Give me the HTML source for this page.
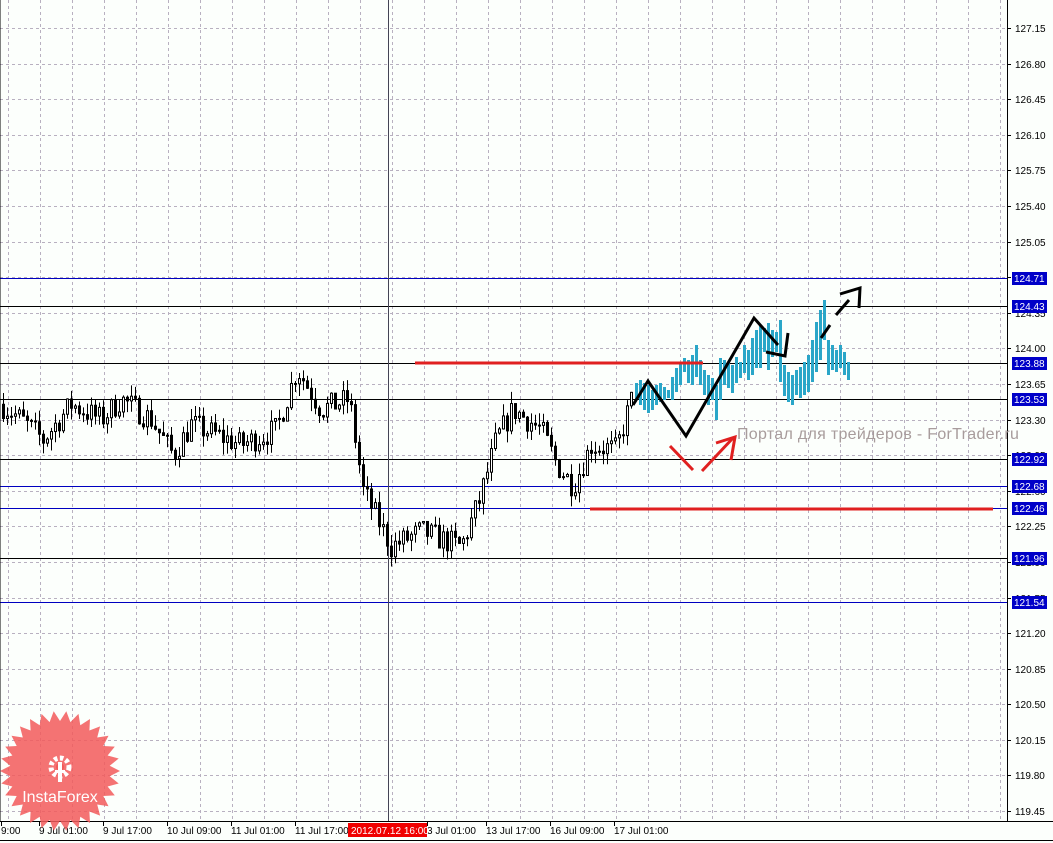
<!DOCTYPE html>
<html><head><meta charset="utf-8"><style>
html,body{margin:0;padding:0;background:#fff;width:1053px;height:843px;overflow:hidden}
svg{display:block}
text{font-family:"Liberation Sans",sans-serif}
</style></head><body>
<svg id="s" width="1053" height="843" xmlns="http://www.w3.org/2000/svg"></svg>
<script>
const s=document.getElementById('s');let h='';
const Y=p=>28+(127.15-p)*101.7;
h+='<rect width="1053" height="843" fill="#fcfffc"/>';
for(let x=8;x<1007;x+=32)h+=`<line x1="${x}.5" y1="0" x2="${x}.5" y2="821" stroke="#b8b0c0" stroke-dasharray="3,3"/>`;
const labels=[];
for(let i=0;i<23;i++){const p=127.15-i*0.35;const y=Math.round(Y(p));labels.push([p,y]);h+=`<line x1="0" y1="${y}.5" x2="1007" y2="${y}.5" stroke="#b8b0c0" stroke-dasharray="3,3"/>`;}
h+='<line x1="1007.5" y1="0" x2="1007.5" y2="821" stroke="#000"/>';
h+='<line x1="0" y1="821.5" x2="1053" y2="821.5" stroke="#000"/>';
h+='<line x1="0" y1="840.5" x2="1053" y2="840.5" stroke="#000"/>';
labels.forEach(([p,y])=>{h+=`<line x1="1007" y1="${y}.5" x2="1011" y2="${y}.5" stroke="#000"/><text x="1015" y="${y+4}" font-size="10" fill="#000">${p.toFixed(2)}</text>`;});
const lv=[[278,'#0000c0','124.71'],[306,'#000','124.43'],[363,'#000','123.88'],[399,'#000','123.53'],[459,'#000','122.92'],[486,'#0000c0','122.68'],[508,'#0000c0','122.46'],[558,'#000','121.96'],[602,'#0000c0','121.54']];
lv.forEach(([y,c])=>{h+=`<line x1="0" y1="${y}.5" x2="1007" y2="${y}.5" stroke="${c}"/>`;});
h+='<line x1="0" y1="0" x2="0" y2="821" stroke="#000"/>';
h+='<line x1="388.5" y1="0" x2="388.5" y2="821" stroke="#445"/>';
const pts=[[0,123.45],[20,123.3],[42,123.1],[70,123.45],[100,123.3],[120,123.5],[150,123.3],[172,122.95],[190,123.25],[240,123.05],[275,123.2],[296,123.8],[320,123.4],[348,123.5],[362,122.6],[390,122.05],[420,122.2],[460,122.05],[478,122.5],[495,123.1],[512,123.4],[540,123.2],[556,122.85],[572,122.65],[590,123.05],[615,123.0],[632,123.55]];
function interp(x){for(let i=0;i<pts.length-1;i++){if(x<=pts[i+1][0]){const t=(x-pts[i][0])/(pts[i+1][0]-pts[i][0]);return pts[i][1]+t*(pts[i+1][1]-pts[i][1]);}}return pts[pts.length-1][1];}
let seed=7;const r=()=>{seed=(seed*16807)%2147483647;return seed/2147483647;};
let prev=interp(0);
for(let x=2;x<632;x+=4){const c=interp(x)+(r()-0.5)*0.25;const o=prev;const hi=Math.max(o,c)+r()*0.12;const lo=Math.min(o,c)-r()*0.12;
h+=`<line x1="${x+1}.5" y1="${Y(hi)}" x2="${x+1}.5" y2="${Y(lo)}" stroke="#000"/>`;
const t=Y(Math.max(o,c)),b=Y(Math.min(o,c));
h+=`<rect x="${x}.5" y="${t}" width="2" height="${Math.max(1,b-t)}" fill="${c>o?'#fff':'#000'}" stroke="#000" stroke-width="1"/>`;prev=c;}
const bb=[[635,383,400],[639,380,405],[643,383,410],[647,385,413],[651,390,410],[655,385,405],[659,383,402],[663,387,400],[667,390,398],[671,377,400],[675,368,392],[679,362,385],[683,358,372],[687,360,383],[691,355,385],[695,345,377],[699,360,385],[703,370,395],[707,375,405],[711,378,400],[715,385,420],[719,358,400],[723,360,385],[727,362,388],[731,365,393],[735,357,383],[739,362,378],[743,345,373],[747,350,380],[751,338,375],[755,330,368],[759,325,368],[763,328,352],[767,323,370],[771,330,357],[775,332,352],[779,320,382],[783,365,396],[787,372,402],[791,375,405],[795,370,395],[799,367,398],[803,362,395],[807,355,392],[811,340,382],[815,322,372],[819,310,360],[823,300,340],[827,340,375],[831,345,370],[835,350,372],[839,345,368],[843,352,375],[847,362,380]];
bb.forEach(([x,a,b])=>{h+=`<rect x="${x}" y="${a}" width="3" height="${b-a}" fill="#2aa6c8"/>`;});
h+='<line x1="415" y1="363" x2="703" y2="363" stroke="#e02020" stroke-width="3"/>';
h+='<line x1="590" y1="509" x2="993" y2="509" stroke="#e02020" stroke-width="3"/>';
h+='<polyline points="633,405 648,381 686,436 754,318 778,345" fill="none" stroke="#000" stroke-width="3"/>';
h+='<polyline points="766,352 785,356 788,333" fill="none" stroke="#000" stroke-width="3"/>';
h+='<line x1="821" y1="338" x2="830" y2="325" stroke="#000" stroke-width="3"/>';
h+='<polyline points="836,315 849,300" fill="none" stroke="#000" stroke-width="3"/>';
h+='<polyline points="840,294 860,288 859,308" fill="none" stroke="#000" stroke-width="3"/>';
h+='<line x1="670" y1="446" x2="693" y2="470" stroke="#e02020" stroke-width="3"/>';
h+='<line x1="702" y1="471" x2="733" y2="438" stroke="#e02020" stroke-width="3"/>';
h+='<polyline points="716,443 735,437 731,460" fill="none" stroke="#e02020" stroke-width="3"/>';
h+='<text x="737" y="439" font-size="16" fill="#a89c9c" letter-spacing="0.3">Портал для трейдеров - ForTrader.ru</text>';
lv.forEach(([y,c,t])=>{h+=`<rect x="1012" y="${y-6}" width="35" height="13" fill="#0000c8"/><text x="1014" y="${y+4}" font-size="10" fill="#fff">${t}</text>`;});
const tl=[[0,'9:00'],[38,'9 Jul 01:00'],[102,'9 Jul 17:00'],[166,'10 Jul 09:00'],[230,'11 Jul 01:00'],[294,'11 Jul 17:00'],[426,'3 Jul 01:00'],[485,'13 Jul 17:00'],[549,'16 Jul 09:00'],[613,'17 Jul 01:00']];
tl.forEach(([x,t])=>{h+=`<line x1="${x+1}.5" y1="821" x2="${x+1}.5" y2="826" stroke="#000"/><text x="${x+1}" y="834" font-size="10" fill="#000">${t}</text>`;});
h+='<rect x="348" y="823" width="79" height="14" fill="#f00000"/><text x="351" y="834" font-size="10" fill="#fff">2012.07.12 16:00</text>';
let star='';const cx=60,cy=771,n=30;for(let i=0;i<n*2;i++){const a=Math.PI*i/n;const rr=i%2?50:60;star+=(cx+rr*Math.cos(a)).toFixed(1)+','+(cy+rr*Math.sin(a)).toFixed(1)+' ';}
h+=`<polygon points="${star}" fill="#f25a5a" opacity="0.85"/>`;
h+='<circle cx="60" cy="767" r="9" fill="none" stroke="#fff" stroke-width="5" stroke-dasharray="3.5,2.5"/><circle cx="60" cy="767" r="4" fill="#f25a5a"/><rect x="58" y="762" width="4" height="20" fill="#fff"/><rect x="55" y="770" width="10" height="3" fill="#fff"/>';
h+='<text x="60" y="802" font-size="16" fill="#fff" text-anchor="middle">InstaForex</text>';
s.innerHTML=h;
</script>
</body></html>
